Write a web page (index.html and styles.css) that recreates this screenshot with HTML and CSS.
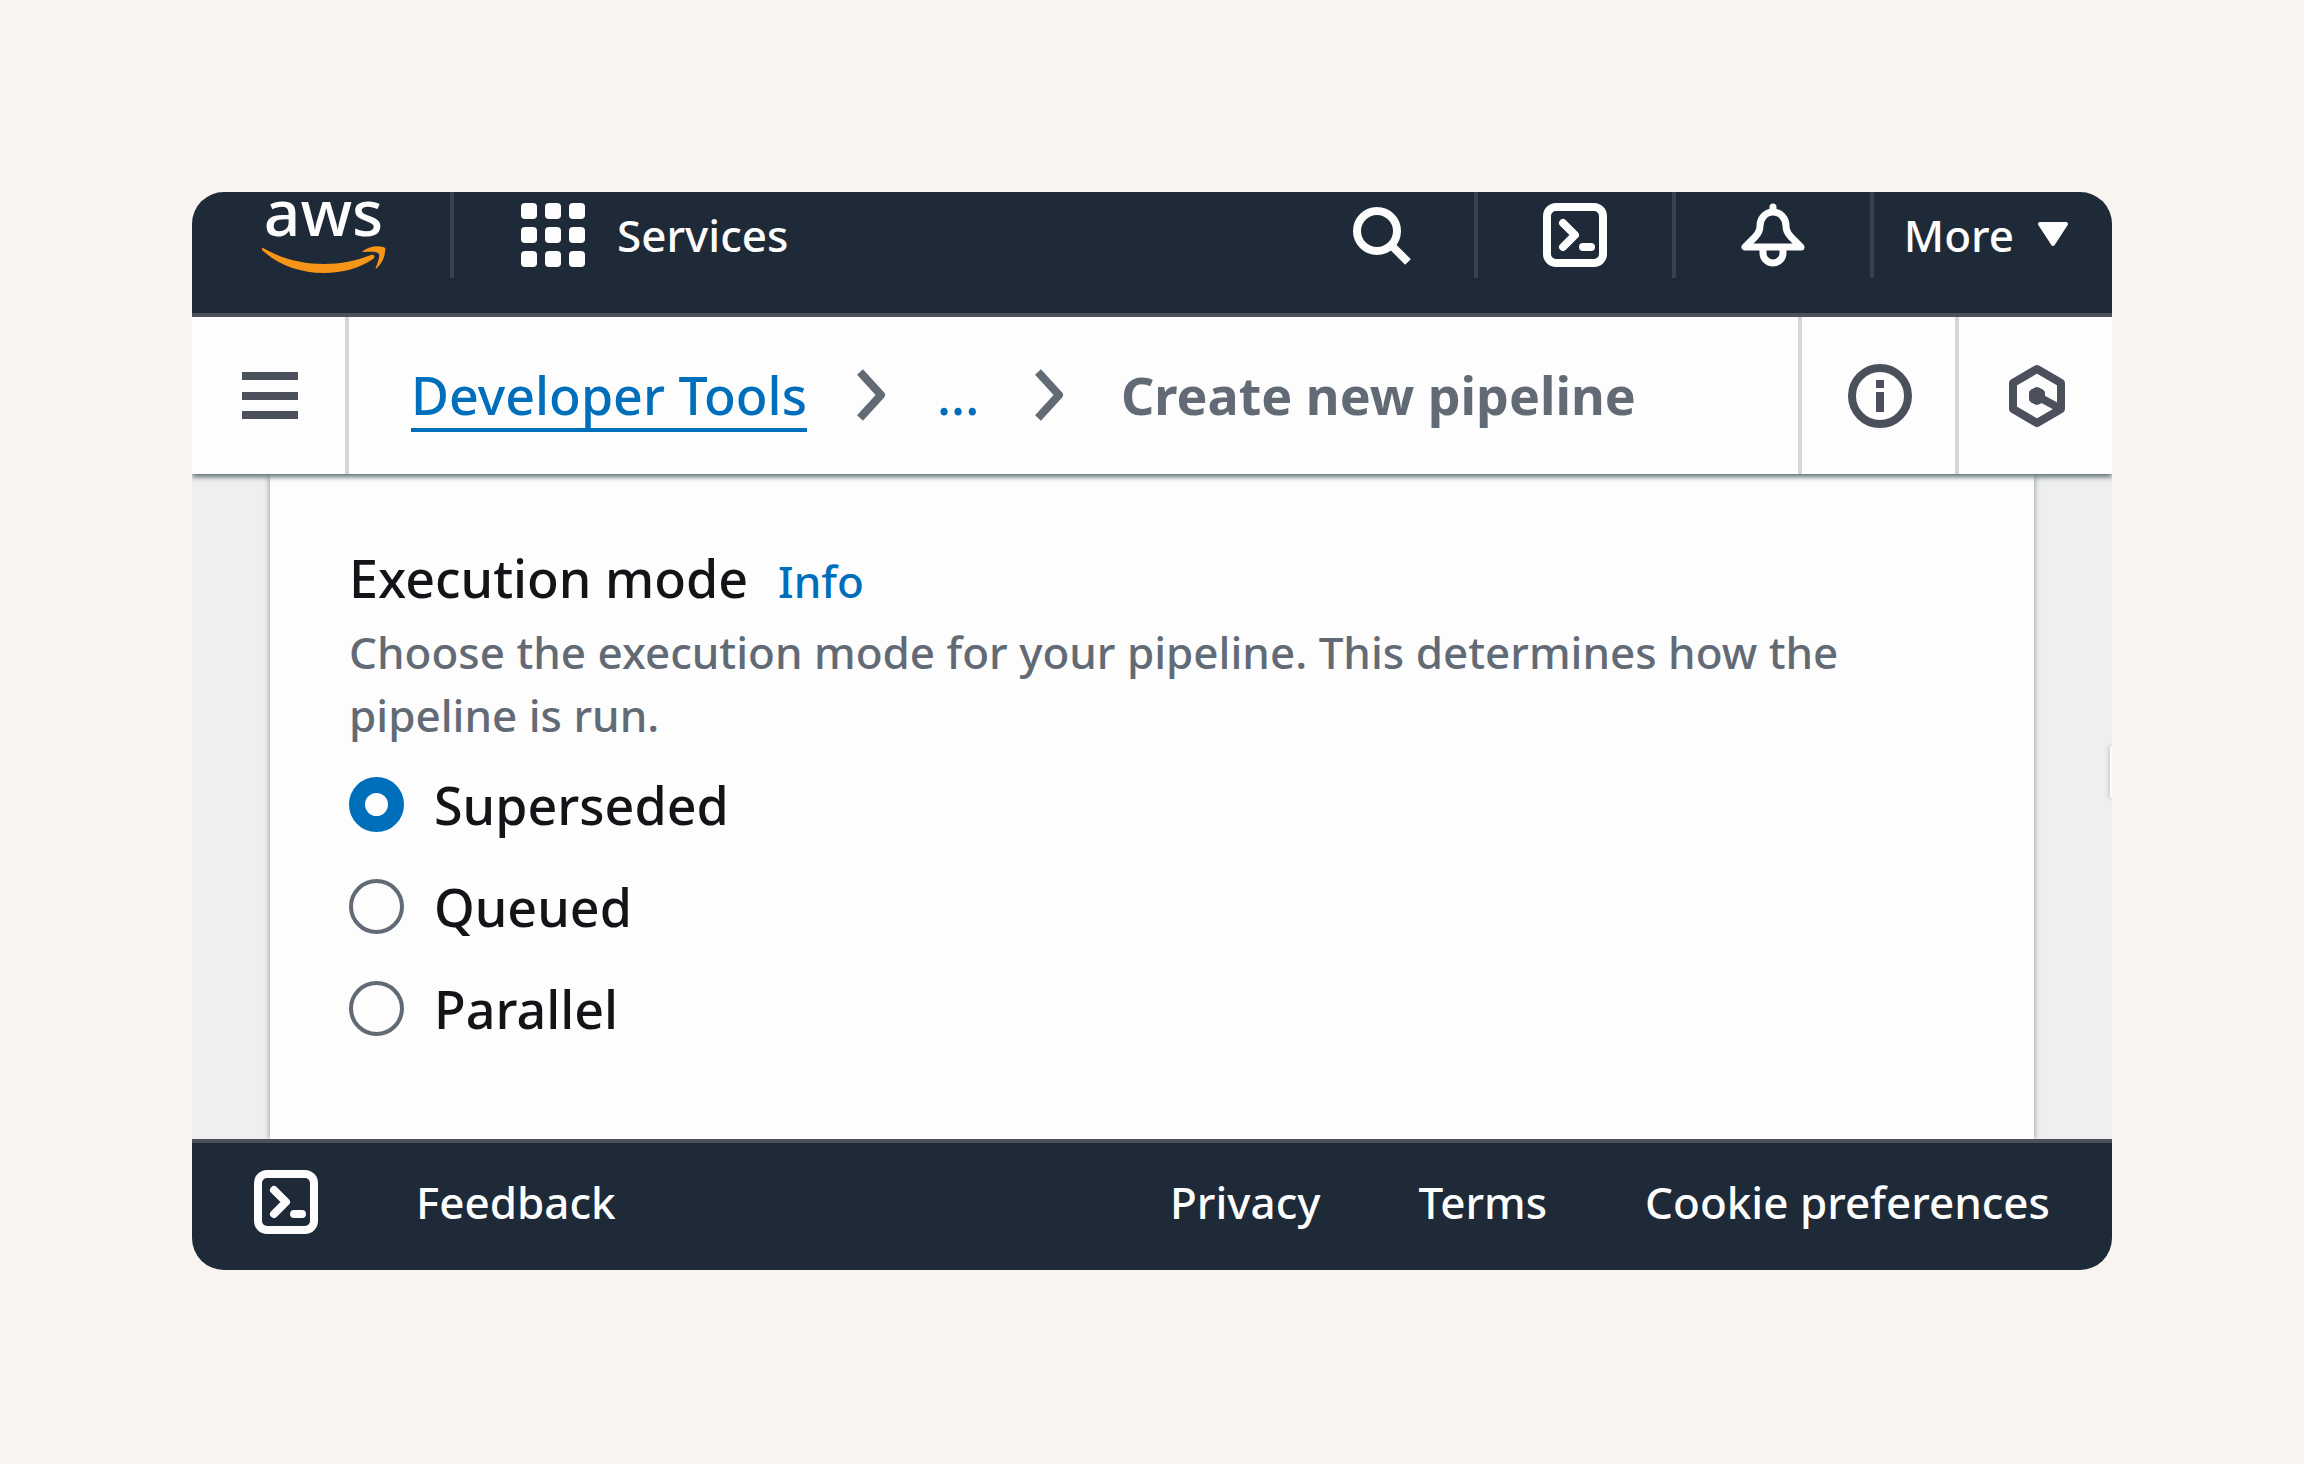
FILE: index.html
```html
<!DOCTYPE html>
<html lang="en">
<head>
    <meta charset="UTF-8">
    <meta name="viewport" content="width=device-width, initial-scale=1.0">
    <title>Create new pipeline</title>
    <link rel="stylesheet" href="styles.css">
</head>
<body>
    <!-- Shared icon used in the header and the footer -->
    <svg class="sprite" aria-hidden="true">
        <symbol id="icon-terminal" viewBox="0 0 64 64">
            <rect x="4" y="4" width="56" height="56" rx="9" fill="none" stroke="currentColor" stroke-width="8"/>
            <path d="M20 20l12 12-12 12M40 44h8" fill="none" stroke="currentColor" stroke-width="8" stroke-linecap="round" stroke-linejoin="round"/>
        </symbol>
    </svg>

    <div class="window">
        <header class="topbar">
            <a class="logo" href="#" aria-label="AWS home">
                <span class="logo-text">aws</span>
                <svg class="logo-smile" viewBox="0 0 124 28">
                    <path d="M1 2C20 13 41 18 62 18c16 0 32-3 47-9 3-1 5 2 2 4-13 9-31 14-49 14C37 27 15 18 0 4c-1-1 0-3 1-2z"/>
                    <path d="M101 5c5-4 14-6 20-4 2 0 3 2 2 4 0 6-3 12-8 17-1 1-2 0-1-1 2-5 4-11 3-13-2-3-10-2-15-2-2 0-2 0-1-1z"/>
                </svg>
            </a>
            <button class="services" type="button">
                <svg class="icon" viewBox="0 0 64 64" fill="currentColor">
                    <rect x="0" y="0" width="16" height="16" rx="4"/>
                    <rect x="24" y="0" width="16" height="16" rx="4"/>
                    <rect x="48" y="0" width="16" height="16" rx="4"/>
                    <rect x="0" y="24" width="16" height="16" rx="4"/>
                    <rect x="24" y="24" width="16" height="16" rx="4"/>
                    <rect x="48" y="24" width="16" height="16" rx="4"/>
                    <rect x="0" y="48" width="16" height="16" rx="4"/>
                    <rect x="24" y="48" width="16" height="16" rx="4"/>
                    <rect x="48" y="48" width="16" height="16" rx="4"/>
                </svg>
                Services
            </button>
            <button class="tool search" type="button" aria-label="Search">
                <svg class="icon" viewBox="0 0 64 64" fill="none" stroke="currentColor" stroke-width="8">
                    <circle cx="27" cy="28" r="20"/>
                    <path d="M41 42l17 17"/>
                </svg>
            </button>
            <button class="tool" type="button" aria-label="CloudShell">
                <svg class="icon"><use href="#icon-terminal"/></svg>
            </button>
            <button class="tool" type="button" aria-label="Notifications">
                <svg class="icon" viewBox="0 0 64 64" fill="none" stroke="currentColor" stroke-width="7" stroke-linecap="round" stroke-linejoin="round">
                    <path d="M32 4v4M32 9c-8 0-13 7-13 14 0 5-2 8-5 11L4 44h56L50 34c-3-3-5-6-5-11 0-7-5-14-13-14z"/>
                    <path d="M22 46v4a10 10 0 0 0 20 0v-4"/>
                </svg>
            </button>
            <button class="more" type="button">
                More
                <svg class="caret" viewBox="0 0 30 26" fill="currentColor" stroke="currentColor" stroke-width="4" stroke-linejoin="round">
                    <path d="M2 2h26L15 22z"/>
                </svg>
            </button>
        </header>

        <div class="navbar">
            <button class="nav-button menu" type="button" aria-label="Open menu">
                <svg class="icon" viewBox="0 0 64 64" fill="currentColor">
                    <path d="M4 8h56v8H4zM4 28h56v8H4zM4 47h56v8H4z"/>
                </svg>
            </button>
            <nav class="breadcrumb" aria-label="Breadcrumb">
                <a class="crumb" href="#">Developer Tools</a>
                <svg class="chevron" viewBox="0 0 30 52"><path d="M3 3l21 23L3 49"/></svg>
                <a class="crumb-more" href="#">...</a>
                <svg class="chevron" viewBox="0 0 30 52"><path d="M3 3l21 23L3 49"/></svg>
                <span class="crumb-current">Create new pipeline</span>
            </nav>
            <button class="nav-button" type="button" aria-label="Info panel">
                <svg class="icon" viewBox="0 0 64 64" fill="currentColor">
                    <circle cx="32" cy="32" r="28" fill="none" stroke="currentColor" stroke-width="8"/>
                    <path d="M28 16h8v8h-8zM28 28h8v20h-8z"/>
                </svg>
            </button>
            <button class="nav-button" type="button" aria-label="Amazon Q">
                <svg class="icon" viewBox="0 0 64 64" fill="none" stroke="currentColor" stroke-width="8" stroke-linejoin="round">
                    <path d="M32 5l24 14v26L32 59 8 45V19z"/>
                    <path d="M32 32l22 12"/>
                    <path d="M32 27l4 2v6l-4 2-4-2v-6z"/>
                </svg>
            </button>
        </div>

        <main class="content">
            <form class="panel">
                <div class="field-title">
                    <h1 id="mode-label">Execution mode</h1>
                    <a href="#">Info</a>
                </div>
                <p class="description">Choose the execution mode for your pipeline. This determines how the pipeline is run.</p>
                <div class="options" role="radiogroup" aria-labelledby="mode-label">
                    <label class="option"><input type="radio" name="mode" value="superseded" checked>Superseded</label>
                    <label class="option"><input type="radio" name="mode" value="queued">Queued</label>
                    <label class="option"><input type="radio" name="mode" value="parallel">Parallel</label>
                </div>
            </form>
            <div class="drawer-edge"></div>
        </main>

        <footer class="footer">
            <button class="shell" type="button" aria-label="CloudShell">
                <svg class="icon"><use href="#icon-terminal"/></svg>
            </button>
            <a class="feedback" href="#">Feedback</a>
            <a href="#">Privacy</a>
            <a href="#">Terms</a>
            <a href="#">Cookie preferences</a>
        </footer>
    </div>
</body>
</html>
```
FILE: styles.css
```css
* {
    box-sizing: border-box;
}
body {
    margin: 0;
    padding: 192px;
    background: #f8f4ef;
    color: #131318;
    font-family: "Noto Sans", "Open Sans", sans-serif;
    font-size: 44px;
    font-weight: 500;
    line-height: 63px;
}
button {
    padding: 0;
    border: none;
    background: none;
    color: inherit;
    font: inherit;
    cursor: pointer;
}
a {
    color: #006fbb;
    text-decoration: none;
}
svg {
    display: block;
    flex: none;
}
.sprite {
    position: absolute;
    width: 0;
    height: 0;
}
.icon {
    width: 64px;
    height: 64px;
}
.window {
    overflow: hidden;
    border-radius: 32px;
    background: #efefef;
}

/* Top bar */
.topbar {
    display: flex;
    align-items: flex-start;
    padding-bottom: 35px;
    border-bottom: 4px solid #4b505c;
    background: #1e2a37;
    color: #fdfdfd;
}
.logo {
    display: flex;
    flex-direction: column;
    align-items: center;
    gap: 14px;
    width: 262px;
    height: 86px;
    padding-left: 5px;
    border-right: 4px solid #3a4148;
    color: #fdfdfd;
}
.logo-text {
    font-size: 64px;
    line-height: 40px;
}
.logo-smile {
    width: 124px;
    height: 28px;
    fill: #f79518;
}
.services {
    display: flex;
    align-items: center;
    gap: 32px;
    height: 86px;
    margin-left: 67px;
    margin-right: auto;
}
.tool {
    display: flex;
    align-items: center;
    justify-content: center;
    width: 198px;
    height: 86px;
    border-right: 4px solid #3a4148;
}
.tool.search {
    width: auto;
    padding: 0 60px;
}
.more {
    display: flex;
    align-items: center;
    justify-content: flex-end;
    gap: 24px;
    width: 238px;
    height: 86px;
    padding-right: 44px;
}
.caret {
    width: 30px;
    height: 26px;
}

/* Breadcrumb bar */
.navbar {
    position: relative;
    z-index: 1;
    display: flex;
    background: #fdfdfd;
    box-shadow: 0 3px 5px #5f6f74;
}
.nav-button {
    display: flex;
    align-items: center;
    justify-content: center;
    width: 157px;
    height: 157px;
    padding-left: 3px;
    border-left: 4px solid #d0d7d6;
    color: #4b505c;
}
.nav-button.menu {
    border-left: none;
    border-right: 4px solid #d0d7d6;
}
.breadcrumb {
    display: flex;
    flex: 1;
    align-items: center;
    gap: 50px;
    padding-bottom: 2px;
    padding-left: 62px;
    font-size: 52px;
}
.crumb {
    margin-top: 6px;
    padding-bottom: 2px;
    border-bottom: 4px solid #006fbb;
}
.crumb-more {
    width: 48px;
}
.chevron {
    width: 30px;
    height: 52px;
    fill: none;
    stroke: #626b75;
    stroke-width: 8px;
    stroke-linejoin: round;
}
.crumb-current {
    margin-left: 6px;
    color: #626b75;
    font-weight: 700;
}

/* Form */
.content {
    position: relative;
    padding: 0 78px;
}
.panel {
    padding: 72px 79px 80px;
    background: #fdfdfd;
    box-shadow: 0 0 6px #7d8d96;
}
.field-title {
    display: flex;
    align-items: baseline;
    gap: 30px;
    margin-bottom: 8px;
}
.field-title h1 {
    margin: 0;
    font-size: 52px;
    font-weight: 500;
}
.description {
    margin: 0 0 6px;
    color: #626b75;
}
.option {
    display: flex;
    align-items: center;
    gap: 30px;
    height: 102px;
    font-size: 52px;
}
.option input {
    appearance: none;
    width: 55px;
    height: 55px;
    margin: 0;
    border: 4px solid #626b75;
    border-radius: 50%;
}
.option input:checked {
    border: 16px solid #006fbb;
}
.drawer-edge {
    position: absolute;
    top: 273px;
    right: 0;
    width: 2px;
    height: 50px;
    background: #fdfdfd;
    box-shadow: 0 0 5px #8d8d8d;
}

/* Footer */
.footer {
    position: relative;
    display: flex;
    align-items: center;
    gap: 98px;
    padding: 27px 62px 36px;
    border-top: 4px solid #4b505c;
    background: #1e2a37;
    color: #fdfdfd;
}
.footer a {
    color: #fdfdfd;
}
.footer .feedback {
    margin-right: auto;
}
```
